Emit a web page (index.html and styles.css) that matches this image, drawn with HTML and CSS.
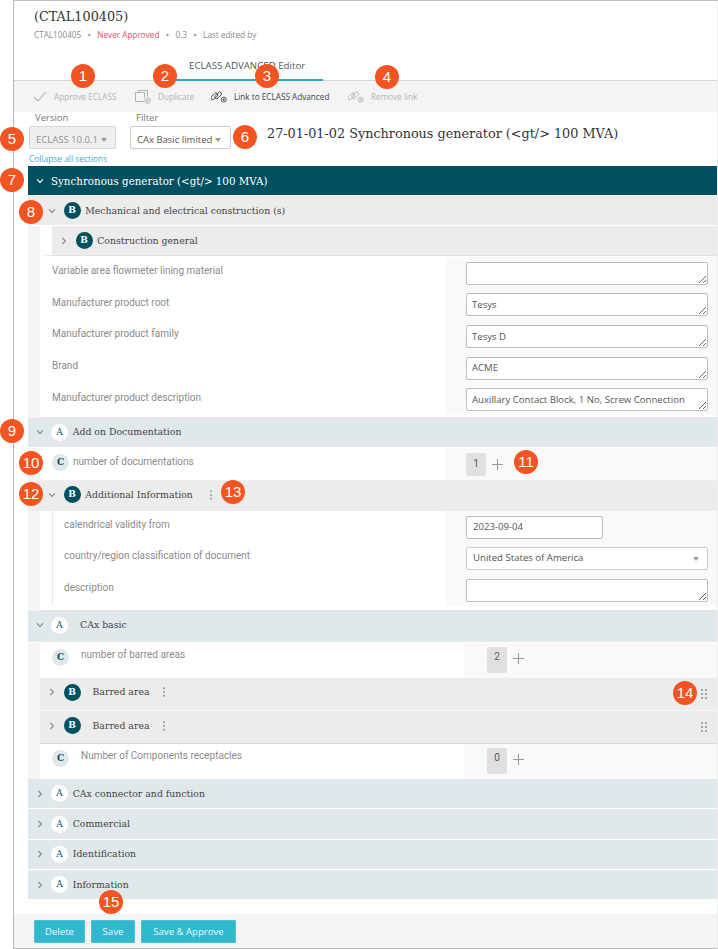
FILE: index.html
```html
<!DOCTYPE html>
<html lang="en">
<head>
<meta charset="utf-8">
<title>ECLASS ADVANCED Editor</title>
<link rel="stylesheet" href="styles.css">
</head>
<body>
<svg class="defs" width="0" height="0" aria-hidden="true">
  <symbol id="down" viewBox="0 0 8 8"><polyline points="1,2.4 4,5.4 7,2.4" fill="none" stroke="currentColor" stroke-width="1.1"/></symbol>
  <symbol id="right" viewBox="0 0 8 8"><polyline points="2.4,1 5.4,4 2.4,7" fill="none" stroke="currentColor" stroke-width="1.1"/></symbol>
  <symbol id="plus" viewBox="0 0 11 11"><path d="M5.5 0v11M0 5.5h11" stroke="currentColor" stroke-width="1.1" fill="none"/></symbol>
  <symbol id="kebab" viewBox="0 0 4 10"><circle cx="2" cy="1.2" r="1"/><circle cx="2" cy="5" r="1"/><circle cx="2" cy="8.8" r="1"/></symbol>
  <symbol id="grip" viewBox="0 0 6 10"><g fill="currentColor"><rect x="0" y="0" width="2" height="2"/><rect x="4" y="0" width="2" height="2"/><rect x="0" y="4" width="2" height="2"/><rect x="4" y="4" width="2" height="2"/><rect x="0" y="8" width="2" height="2"/><rect x="4" y="8" width="2" height="2"/></g></symbol>
  <symbol id="link" viewBox="0 0 16 12">
    <g fill="none" stroke="currentColor" stroke-width=".9">
      <rect x="-.6" y="3.6" width="8" height="3.6" rx="1.8" transform="rotate(-45 3.4 5.4)"/>
      <rect x="3.2" y="2.6" width="8" height="3.6" rx="1.8" transform="rotate(-45 7.2 4.4)"/>
      <circle cx="12.8" cy="8.6" r="2.5"/>
    </g>
    <path d="M12.8 7.3v2.6M11.5 8.6h2.6" stroke="currentColor" stroke-width=".8"/>
  </symbol>
</svg>

<div class="frame">
  <header class="head">
    <h1 class="doc-title">(CTAL100405)</h1>
    <p class="meta">CTAL100405<i class="dot">•</i><span class="never">Never Approved</span><i class="dot">•</i>0.3<i class="dot">•</i>Last edited by</p>
    <nav class="tabs"><span class="tab">ECLASS ADVANCED Editor</span></nav>
  </header>

  <div class="toolbar">
    <span class="tool off tool-approve"><svg class="ic-check" viewBox="0 0 14 11"><polyline points="1,6 5,10 13,1" fill="none" stroke="currentColor" stroke-width="1.1"/></svg>Approve ECLASS</span>
    <span class="tool off tool-dup"><svg class="ic-dup" viewBox="0 0 16 14"><g fill="none" stroke="currentColor" stroke-width="1"><path d="M3.5 2.5V.5h9v6"/><path d="M9 11.5H.5v-9h9v5"/><circle cx="12.6" cy="10.6" r="2.8"/></g><path d="M12.6 9v3.2M11 10.6h3.2" stroke="currentColor" stroke-width=".9"/></svg>Duplicate</span>
    <span class="tool tool-link"><svg class="ic-link"><use href="#link"/></svg>Link to ECLASS Advanced</span>
    <span class="tool off"><svg class="ic-link"><use href="#link"/></svg>Remove link</span>
  </div>

  <div class="form-row">
    <div class="control ctl-version">
      <label class="ctl-label">Version</label>
      <div class="select disabled">ECLASS 10.0.1<b class="caret"></b></div>
    </div>
    <div class="control ctl-filter">
      <label class="ctl-label">Filter</label>
      <div class="select">CAx Basic limited<b class="caret"></b></div>
    </div>
    <h2 class="class-title">27-01-01-02 Synchronous generator (&lt;gt/&gt; 100 MVA)</h2>
    <a class="collapse" href="#">Collapse all sections</a>
  </div>

  <main class="sections">
    <div class="row teal"><svg class="chev"><use href="#down"/></svg><span class="teal-text">Synchronous generator (&lt;gt/&gt; 100 MVA)</span></div>

    <div class="row row-b sub"><svg class="chev"><use href="#down"/></svg><span class="bdg bdg-b">B</span><span class="row-text">Mechanical and electrical construction (s)</span></div>
    <div class="body">
      <div class="row row-b inner"><svg class="chev"><use href="#right"/></svg><span class="bdg bdg-b">B</span><span class="row-text">Construction general</span></div>
      <div class="fields">
        <div class="field"><span class="flabel">Variable area flowmeter lining material</span><div class="fval"><textarea class="ta"></textarea></div></div>
        <div class="field"><span class="flabel">Manufacturer product root</span><div class="fval"><textarea class="ta">Tesys</textarea></div></div>
        <div class="field"><span class="flabel">Manufacturer product family</span><div class="fval"><textarea class="ta">Tesys D</textarea></div></div>
        <div class="field"><span class="flabel">Brand</span><div class="fval"><textarea class="ta">ACME</textarea></div></div>
        <div class="field"><span class="flabel">Manufacturer product description</span><div class="fval"><textarea class="ta">Auxillary Contact Block, 1 No, Screw Connection</textarea></div></div>
      </div>
    </div>

    <div class="row row-a"><svg class="chev"><use href="#down"/></svg><span class="bdg bdg-a">A</span><span class="row-text">Add on Documentation</span></div>
    <div class="body">
      <div class="count-row doc"><span class="bdg bdg-c">C</span><span class="flabel">number of documentations</span><div class="fval"><span class="num">1</span><svg class="plus"><use href="#plus"/></svg></div></div>
    </div>

    <div class="row row-b sub tall"><svg class="chev"><use href="#down"/></svg><span class="bdg bdg-b">B</span><span class="row-text">Additional Information</span><svg class="kebab"><use href="#kebab"/></svg></div>
    <div class="body">
      <div class="fields ruled">
        <div class="field"><span class="flabel">calendrical validity from</span><div class="fval"><input class="inp date" type="text" value="2023-09-04"></div></div>
        <div class="field"><span class="flabel">country/region classification of document</span><div class="fval"><div class="inp sel">United States of America<b class="caret"></b></div></div></div>
        <div class="field"><span class="flabel">description</span><div class="fval"><textarea class="ta"></textarea></div></div>
      </div>
    </div>

    <div class="row row-a cax"><svg class="chev"><use href="#down"/></svg><span class="bdg bdg-a">A</span><span class="row-text far">CAx basic</span></div>
    <div class="body">
      <div class="count-row cx"><span class="bdg bdg-c">C</span><span class="flabel">number of barred areas</span><div class="fval"><span class="num">2</span><svg class="plus"><use href="#plus"/></svg></div></div>
      <div class="row row-b barred"><svg class="chev"><use href="#right"/></svg><span class="bdg bdg-b">B</span><span class="row-text far">Barred area</span><svg class="kebab"><use href="#kebab"/></svg><svg class="grip"><use href="#grip"/></svg></div>
      <div class="row row-b barred second"><svg class="chev"><use href="#right"/></svg><span class="bdg bdg-b">B</span><span class="row-text far">Barred area</span><svg class="kebab"><use href="#kebab"/></svg><svg class="grip"><use href="#grip"/></svg></div>
      <div class="count-row cx"><span class="bdg bdg-c">C</span><span class="flabel">Number of Components receptacles</span><div class="fval"><span class="num">0</span><svg class="plus"><use href="#plus"/></svg></div></div>
    </div>

    <div class="row row-a closed"><svg class="chev"><use href="#right"/></svg><span class="bdg bdg-a">A</span><span class="row-text">CAx connector and function</span></div>
    <div class="row row-a closed"><svg class="chev"><use href="#right"/></svg><span class="bdg bdg-a">A</span><span class="row-text">Commercial</span></div>
    <div class="row row-a closed"><svg class="chev"><use href="#right"/></svg><span class="bdg bdg-a">A</span><span class="row-text">Identification</span></div>
    <div class="row row-a closed"><svg class="chev"><use href="#right"/></svg><span class="bdg bdg-a">A</span><span class="row-text">Information</span></div>
  </main>

  <footer class="foot">
    <button class="btn btn-del" type="button">Delete</button>
    <button class="btn btn-save" type="button">Save</button>
    <button class="btn btn-appr" type="button">Save &amp; Approve</button>
  </footer>
</div>

<span class="mark m1">1</span><span class="mark m2">2</span><span class="mark m3">3</span><span class="mark m4">4</span>
<span class="mark m5">5</span><span class="mark m6">6</span><span class="mark m7">7</span><span class="mark m8">8</span>
<span class="mark m9">9</span><span class="mark m10">10</span><span class="mark m11">11</span><span class="mark m12">12</span>
<span class="mark m13">13</span><span class="mark m14">14</span><span class="mark m15">15</span>
</body>
</html>
```
FILE: styles.css
```css
* { box-sizing: border-box; }
html, body { margin: 0; padding: 0; }
body { width: 718px; height: 949px; overflow: hidden; background: #fff; font-family: Roboto, sans-serif; position: relative; }
.defs { position: absolute; }

.frame {
  margin-left: 13px;
  height: 949px;
  border-left: 1px solid #b9b9b9;
  border-top: 1px solid #bcbcbc;
  border-bottom: 1px solid #b9b9b9;
  border-right: 1px solid #eee;
  display: flex;
  flex-direction: column;
}

/* header */
.head { height: 80px; padding: 7px 0 0 20px; border-bottom: 1px solid #d6d6d6; position: relative; }
.doc-title { margin: 0; font: 400 12.8px/18px "DejaVu Serif", serif; color: #333; }
.meta { margin: 3px 0 0; font: 400 8.2px/12px "Open Sans", sans-serif; color: #8b8b8b; }
.dot { font-style: normal; margin: 0 6.5px; color: #777; }
.never { color: #dd5560; }
.tabs { position: absolute; left: 162px; bottom: -1px; }
.tab { display: block; width: 147px; height: 22px; padding-left: 13px; font: 400 9.7px/13px "Open Sans", sans-serif; color: #555; border-bottom: 2px solid #2e9fd6; }

/* toolbar */
.toolbar { height: 31px; background: #f4f4f4; display: flex; align-items: center; padding-left: 19px; font: 400 8.2px/12px "Open Sans", sans-serif; color: #444; }
.tool { display: flex; align-items: center; }
.tool.off { color: #b3b3b3; }
.tool-approve { width: 102px; }
.tool-dup { width: 76px; }
.tool-link { width: 137px; }
.ic-check { width: 14px; height: 11px; margin-right: 7px; }
.ic-dup { width: 16px; height: 14px; margin-right: 7px; }
.ic-link { width: 16px; height: 12px; margin-right: 7px; }

/* form row */
.form-row { height: 54px; position: relative; display: flex; padding-left: 15px; }
.ctl-version { width: 101px; }
.ctl-filter { width: 137px; }
.ctl-label { display: block; margin: 0 0 3px 6px; font: 400 9.5px/11px "Open Sans", sans-serif; color: #777; height: 11px; }
.select { height: 23px; border: 1px solid #ccc; border-radius: 2px; padding: 1.5px 0 0 6px; font: 400 9.5px/21px "Open Sans", sans-serif; color: #555; background: #fff; white-space: nowrap; }
.ctl-version .select { width: 87px; }
.ctl-filter .select { width: 101px; }
.select.disabled { background: #efefef; color: #8f8f8f; border-color: #d6d6d6; }
.caret { display: inline-block; width: 0; height: 0; margin-left: 3px; vertical-align: 1px; border-left: 3.5px solid transparent; border-right: 3.5px solid transparent; border-top: 4px solid #999; }
.class-title { margin: 13px 0 0; font: 400 12.8px/18px "DejaVu Serif", serif; color: #333; white-space: nowrap; }
.collapse { position: absolute; left: 15px; top: 41px; font: 400 8.4px/12px "Open Sans", sans-serif; color: #4aa7dc; text-decoration: none; }

/* sections */
.sections { margin-left: 14px; flex: 1; }
.row { display: flex; align-items: center; }
.chev { width: 8px; height: 8px; color: #888; flex: none; margin-left: 7.5px; }
.teal { height: 29px; margin-bottom: 1px; background: #00505f; color: #fff; }
.teal .chev { color: #fff; }
.teal-text { margin-left: 7.5px; font: 400 10.3px/14px "DejaVu Serif", serif; }

.row-a { height: 29px; margin-bottom: 1px; background: #e0e8eb; }
.row-a.cax { height: 31px; padding-bottom: 2px; }
.row-a.closed { height: 29.3px; position: relative; top: .5px; }
.row-b { background: #ececec; }
.sub { height: 29px; margin-bottom: 1px; }
.sub.tall { height: 30px; margin-bottom: 0; padding-bottom: 2px; }
.sub.tall .kebab { margin-left: 16px; }
.sub .chev { margin-left: 20px; }
.inner { height: 30px; border-left: 12px solid #fff; border-bottom: 1px solid #e2e2e2; }
.inner .chev { margin-left: 8px; }
.barred { height: 33px; padding-bottom: 3px; border-bottom: 1px solid #f6f6f6; }
.barred.second { padding-bottom: 2px; border-bottom-color: #d9d9d9; }
.barred .chev { margin-left: 8px; }
.bdg { flex: none; width: 17px; height: 17px; border-radius: 50%; font: 700 9px/17px "DejaVu Serif", serif; text-align: center; margin-left: 7.5px; }
.bdg-b { background: #00505f; color: #fff; }
.bdg-a { background: #fff; color: #00505f; font-weight: 400; }
.bdg-c { background: #dfe8eb; color: #00505f; margin-left: 12px; }
.row-text { margin-left: 4.7px; font: 400 9.35px/14px "DejaVu Serif", serif; color: #444; white-space: nowrap; }
.row-text.far { margin-left: 12px; }
.kebab { width: 4px; height: 10px; fill: #999; margin-left: 12px; flex: none; }
.grip { width: 6px; height: 10px; color: #a6a6a6; margin: 3px 10px 0 auto; flex: none; }

.body { background: #f4f4f4; padding-left: 12px; }
.fields { background: #fff; padding: .7px 0 1.5px; border-bottom: 1px solid #e4e4e4; }
.fields.ruled { padding: 0 0 4px; }
.field { display: flex; height: 31.7px; }
.flabel { padding: 7.3px 0 0 12px; width: 405px; flex: none; font: 400 10px/14px Roboto, sans-serif; color: #8b8b8b; }
.fval { flex: 1; background: #f9f9f9; padding: 5px 9px 0 21px; min-width: 0; }
.ruled .flabel { padding: 7px 0 0 24px; background: linear-gradient(#e9e9e9, #e9e9e9) 12px 0 / 1px 100% no-repeat; }
.ta, .inp { display: block; width: 100%; height: 23px; margin: 0; padding: 3.5px 5px 0; border: 1px solid #bdbdbd; border-radius: 2px; background: #fff; font: 400 9.6px/14px "Open Sans", sans-serif; color: #555; outline: 0; }
.ta { resize: vertical; overflow: hidden; }
.inp.date { width: 137px; padding: 0 6px 1px; }
.inp.sel { position: relative; padding: 3px 6px 0; border-color: #ccc; }
.inp.sel .caret { position: absolute; right: 8px; top: 9px; margin: 0; }

.count-row { display: flex; background: #fff; position: relative; }
.count-row .flabel { padding: 0; width: auto; flex: none; margin-left: 4px; }
.count-row .bdg { margin-top: 6.5px; }
.count-row .fval { position: absolute; top: 0; bottom: 0; right: 0; display: flex; background: #f9f9f9; padding: 0; }
.doc { height: 33px; border-bottom: 1px solid #f0f0f0; }
.doc .flabel { padding-top: 7px; }
.doc .fval { left: 405px; padding: 5px 0 0 21px; }
.cx { height: 35px; }
.cx .bdg { margin-top: 6px; }
.cx .flabel { margin-left: 12px; padding-top: 5px; }
.cx .fval { left: 424px; padding: 4px 0 0 23px; }
.num { display: block; width: 20px; background: #e0e0e0; border-radius: 2px; text-align: center; font: 400 10px/22px Roboto, sans-serif; color: #555; }
.doc .num { height: 23px; }
.cx .num { height: 26px; line-height: 20px; }
.plus { width: 11px; height: 11px; margin: 6px 0 0 6px; color: #999; }

/* footer */
.foot { height: 34px; background: #f4f4f4; padding: 6px 0 0 20px; display: flex; gap: 6px; align-items: flex-start; flex: none; }
.btn { height: 23px; border: 1px solid #4dc0d2; border-radius: 1px; background: #30b8cc; color: #eafafd; font: 400 9.6px/20px "Open Sans", sans-serif; padding: 0; }
.btn-del { width: 51px; }
.btn-save { width: 44px; }
.btn-appr { width: 95px; }

/* numbered callouts */
.mark { position: absolute; width: 24px; height: 24px; border-radius: 50%; background: #f45322; color: #fff; text-align: center; font: 400 15px/24px "Liberation Sans", Arial, sans-serif; }
.m1 { left: 71px; top: 64px; }
.m2 { left: 153px; top: 64px; }
.m3 { left: 255px; top: 64px; }
.m4 { left: 375px; top: 65px; }
.m5 { left: 0; top: 127px; }
.m6 { left: 233px; top: 125px; }
.m7 { left: 0; top: 168px; }
.m8 { left: 19px; top: 200px; }
.m9 { left: 0; top: 419px; }
.m10 { left: 19px; top: 451px; }
.m11 { left: 514px; top: 450px; }
.m12 { left: 19px; top: 482px; }
.m13 { left: 221px; top: 480px; }
.m14 { left: 673px; top: 681px; }
.m15 { left: 99px; top: 890px; }
```
